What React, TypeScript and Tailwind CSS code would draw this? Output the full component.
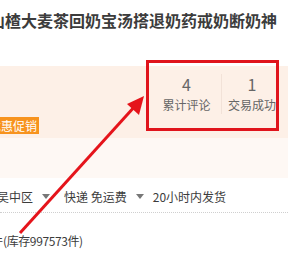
import React from "react";

const font = {
  fontFamily: '"Noto Sans CJK SC", "Microsoft YaHei", sans-serif',
};

function Caret() {
  return (
    <span className="inline-block w-0 h-0 border-l-[4px] border-r-[4px] border-t-[5px] border-l-transparent border-r-transparent border-t-[#777] mx-[9px] align-middle" />
  );
}

export default function App() {
  return (
    <div
      className="relative w-[298px] h-[261px] overflow-hidden bg-white"
      style={font}
    >
      <div className="w-[288px] flex flex-col">
        {/* title */}
        <h1 className="mt-[10px] ml-[-11px] whitespace-nowrap text-[16px] leading-[20px] font-bold text-[#3c3c3c]">
          山楂大麦茶回奶宝汤搭退奶药戒奶断奶神
        </h1>

        {/* price band */}
        <div className="mt-[36px] h-[72px] bg-[#fdf0e7] flex">
          <div className="flex-1 flex items-end pb-[4px]">
            <span className="ml-[-13px] bg-[#f7931e] text-white text-[12px] leading-[17px] px-[2px]">
              优惠促销
            </span>
          </div>
          <div className="w-[125px] mr-[11px] flex overflow-hidden pt-[8px] text-[#666]">
            <div className="w-[69px] shrink-0 flex flex-col items-center h-[40px]">
              <span className="text-[16px] leading-[20px]">4</span>
              <span className="text-[12px] leading-[18px] mt-[2px]">累计评论</span>
            </div>
            <div className="w-px h-[40px] bg-[#f2e2d8] shrink-0" />
            <div className="w-[60px] shrink-0 flex flex-col items-center h-[40px]">
              <span className="text-[16px] leading-[20px]">1</span>
              <span className="text-[12px] leading-[18px] mt-[2px] whitespace-nowrap">交易成功</span>
            </div>
          </div>
        </div>
        <div className="h-[40px] bg-[#fef8f4]" />

        {/* delivery */}
        <div className="h-[35px] pt-[3px] flex items-center text-[12px] text-[#3c3c3c] border-b border-dotted border-[#cfcfcf] whitespace-nowrap">
          <span className="ml-[-3px]">吴中区</span>
          <Caret />
          <span className="ml-[5px]">快递 免运费</span>
          <Caret />
          <span>20小时内发货</span>
        </div>

        <div className="mt-[20px] ml-[-9px] text-[12px] leading-[16px] text-[#3c3c3c] whitespace-nowrap">
          件<span className="tracking-[-0.4px]">(库存997573件)</span>
        </div>
      </div>

      {/* annotation */}
      <div className="absolute left-[146px] top-[60px] w-[133px] h-[71px] border-[3px] border-[#e0141c]" />
      <svg
        className="absolute left-0 top-0"
        width="298"
        height="261"
        viewBox="0 0 298 261"
      >
        <line x1="20" y1="233" x2="136" y2="105" stroke="#e5141b" strokeWidth="3" />
        <polygon points="144,96 127,104 139,115" fill="#e5141b" />
      </svg>
    </div>
  );
}
